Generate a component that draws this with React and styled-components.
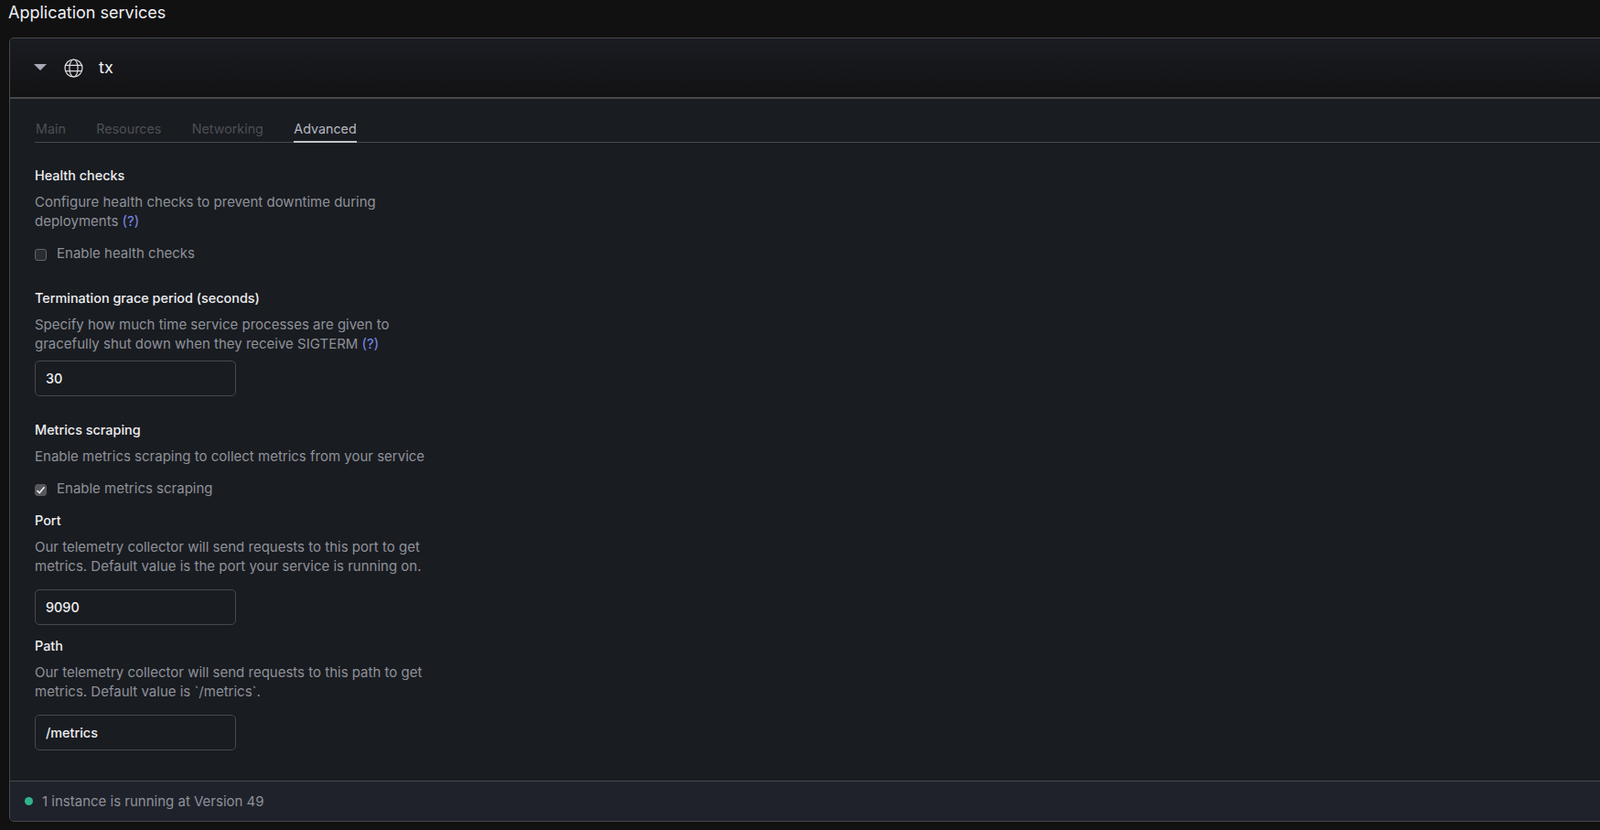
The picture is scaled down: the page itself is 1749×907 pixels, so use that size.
import React from 'react'
import styled, { createGlobalStyle } from 'styled-components'

const GlobalStyle = createGlobalStyle`
  html, body {
    margin: 0;
    padding: 0;
    height: 100%;
    overflow: hidden;
    background: #111112;
  }
  * {
    box-sizing: border-box;
  }
`

const Page = styled.div`
  width: 1749px;
  height: 907px;
  overflow: hidden;
  font-family: Inter, "Liberation Sans", sans-serif;
  font-size: 15px;
  line-height: 21px;
  color: #8f9199;
`

const PageTitle = styled.h2`
  margin: 0;
  height: 41px;
  padding: 3px 0 0 9px;
  font-size: 18px;
  line-height: 22px;
  font-weight: 400;
  color: #f0f0f2;
`

const Card = styled.section`
  width: 1800px;
  height: 857px;
  margin-left: 10px;
  display: flex;
  flex-direction: column;
  border: 1px solid #46484c;
  border-radius: 5px;
  background: #191c21;
  overflow: hidden;
`

const CardHeader = styled.header`
  height: 66px;
  flex: none;
  display: flex;
  align-items: center;
  padding-left: 26px;
  border-bottom: 2px solid #46484c;
  background: linear-gradient(180deg, #1a1c23 0%, #121213 100%);
`

const Caret = styled.span`
  width: 0;
  height: 0;
  border-left: 7px solid transparent;
  border-right: 7px solid transparent;
  border-top: 7px solid #a9a9b6;
  margin: -1px 19px 0 0;
`

const ServiceName = styled.span`
  margin: -1px 0 0 17px;
  font-size: 18px;
  color: #f0f0f2;
`

const CardBody = styled.div`
  flex: 1;
  padding: 0 27px;
`

const Tabs = styled.nav`
  height: 48px;
  display: flex;
  align-items: flex-end;
  gap: 33.4px;
  padding-left: 1px;
  border-bottom: 1px solid #46484c;
  font-size: 14.3px;
`

const Tab = styled.span`
  height: 26px;
  margin-bottom: -1px;
  color: ${props => (props.$active ? '#b7b8c0' : '#4d4f56')};
  border-bottom: ${props => (props.$active ? '2px solid #c4c5cc' : 'none')};
`

const Section = styled.div`
  width: 440px;
  margin-top: ${props => props.$top || 0}px;
`

const Heading = styled.h4`
  margin: 0 0 8px;
  font-size: 14.4px;
  line-height: 21px;
  font-weight: 500;
  color: #eeeef0;
`

const Description = styled.p`
  margin: 0;
`

const HelpLink = styled.a`
  color: #7a8bee;
`

const CheckRow = styled.label`
  display: flex;
  align-items: center;
  gap: 11px;
  height: 21px;
  margin-top: ${props => props.$top || 0}px;
`

const CheckBox = styled.span`
  width: 13px;
  height: 13px;
  flex: none;
  display: flex;
  align-items: center;
  justify-content: center;
  margin-top: 4px;
  border: 1px solid ${props => (props.$checked ? '#55575c' : '#64666c')};
  border-radius: 3px;
  background: ${props => (props.$checked ? '#55575c' : '#2a2d33')};
`

const TextInput = styled.input`
  display: block;
  width: 220px;
  height: 39px;
  margin-top: ${props => props.$top || 0}px;
  padding: 0 11px;
  border: 1px solid #46484c;
  border-radius: 5px;
  background: transparent;
  outline: none;
  font: 500 14.4px Inter, "Liberation Sans", sans-serif;
  color: #f0f0f2;
`

const CardFooter = styled.footer`
  height: 44px;
  flex: none;
  display: flex;
  align-items: center;
  gap: 10px;
  padding-left: 16px;
  border-top: 1px solid #46484c;
  background: #1f222b;
`

const StatusDot = styled.span`
  width: 9px;
  height: 9px;
  border-radius: 50%;
  background: #2fb48b;
`

const GlobeIcon = () => (
  <svg width="21" height="21" viewBox="0 0 21 21" fill="none" stroke="#dcdce0" strokeWidth="1.2">
    <circle cx="10.5" cy="10.5" r="9.5" />
    <ellipse cx="10.5" cy="10.5" rx="4.6" ry="9.5" />
    <path d="M1.6 7.4h17.8M1.6 13.6h17.8" />
  </svg>
)

const CheckMark = () => (
  <svg width="11" height="11" viewBox="0 0 11 11" fill="none" stroke="#f2f2f2" strokeWidth="1.5">
    <path d="M1.5 6l2.7 2.6 5.3-6.4" />
  </svg>
)

const App = () => (
  <Page>
    <GlobalStyle />
    <PageTitle>Application services</PageTitle>
    <Card>
      <CardHeader>
        <Caret />
        <GlobeIcon />
        <ServiceName>tx</ServiceName>
      </CardHeader>
      <CardBody>
        <Tabs>
          <Tab>Main</Tab>
          <Tab>Resources</Tab>
          <Tab>Networking</Tab>
          <Tab $active>Advanced</Tab>
        </Tabs>

        <Section $top={25}>
          <Heading>Health checks</Heading>
          <Description>
            Configure health checks to prevent downtime during deployments <HelpLink>(?)</HelpLink>
          </Description>
          <CheckRow $top={14}>
            <CheckBox />
            Enable health checks
          </CheckRow>
        </Section>

        <Section $top={28}>
          <Heading>Termination grace period (seconds)</Heading>
          <Description>
            Specify how much time service processes are given to gracefully shut down when they
            receive SIGTERM <HelpLink>(?)</HelpLink>
          </Description>
          <TextInput $top={8} defaultValue="30" />
        </Section>

        <Section $top={26}>
          <Heading>Metrics scraping</Heading>
          <Description>Enable metrics scraping to collect metrics from your service</Description>
          <CheckRow $top={14}>
            <CheckBox $checked>
              <CheckMark />
            </CheckBox>
            Enable metrics scraping
          </CheckRow>
        </Section>

        <Section $top={14}>
          <Heading>Port</Heading>
          <Description>
            Our telemetry collector will send requests to this port to get metrics. Default value
            is the port your service is running on.
          </Description>
          <TextInput $top={15} defaultValue="9090" />
        </Section>

        <Section $top={12}>
          <Heading>Path</Heading>
          <Description>
            Our telemetry collector will send requests to this path to get metrics. Default value
            is `/metrics`.
          </Description>
          <TextInput $top={15} defaultValue="/metrics" />
        </Section>
      </CardBody>
      <CardFooter>
        <StatusDot />
        1 instance is running at Version 49
      </CardFooter>
    </Card>
  </Page>
)

export default App
